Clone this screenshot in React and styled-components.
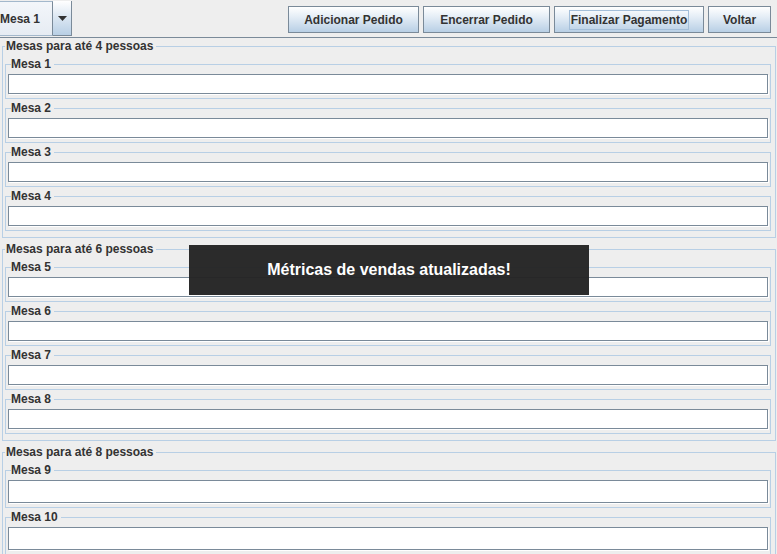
import React from 'react'
import styled, { createGlobalStyle } from 'styled-components'

const Global = createGlobalStyle`
    html, body {
        margin: 0;
        padding: 0;
        background: #eeeeee;
        overflow: hidden;
    }
    body {
        font-family: "Liberation Sans", Arial, sans-serif;
        font-size: 12px;
        color: #333333;
    }
`

const Frame = styled.div`
    position: relative;
    width: 777px;
    height: 554px;
    overflow: hidden;
    background: #eeeeee;
`

const Toolbar = styled.div`
    display: flex;
    align-items: flex-start;
    height: 37px;
    border-bottom: 1px solid #7a8a99;
    box-sizing: content-box;
`

const Combo = styled.div`
    display: flex;
    margin-top: 1px;
    height: 35px;
`

const ComboValue = styled.div`
    width: 52px;
    height: 33px;
    display: flex;
    align-items: center;
    font-weight: bold;
    color: #333333;
    background: linear-gradient(#f3f6fa, #e6ecf3);
    border: 1px solid #a3b8cc;
    border-left: none;
    border-right-color: #7a8a99;
`

const ComboArrow = styled.div`
    width: 18px;
    height: 34px;
    display: flex;
    align-items: center;
    justify-content: center;
    background: linear-gradient(#ffffff, #dde8f3 45%, #b8cfe5);
    border: 1px solid #7a8a99;
    border-left: none;
    border-top: none;
`

const Spacer = styled.div`
    flex: 1;
`

const Buttons = styled.div`
    display: flex;
    gap: 4px;
    margin-top: 6px;
    margin-right: 6px;
`

const Button = styled.button`
    box-sizing: border-box;
    width: ${p => p.w}px;
    height: 27px;
    padding: 0;
    display: flex;
    align-items: center;
    justify-content: center;
    font-family: "Liberation Sans", Arial, sans-serif;
    font-size: 12px;
    font-weight: bold;
    color: #333333;
    background: linear-gradient(#ffffff, #e4edf6 40%, #b8cfe5);
    border: 1px solid #7a8a99;
    border-radius: 0;
`

const FocusText = styled.span`
    padding: 2px 1px;
    border: ${p => (p.focused ? '1px solid #a3bed9' : '1px solid transparent')};
`

const Content = styled.div`
    display: flex;
    flex-direction: column;
    gap: 4px;
    padding-top: 1px;
`

const Group = styled.fieldset`
    margin: 0 1px 0 2px;
    padding: 4px 4px 6px 2px;
    border: 1px solid #b8cfe5;
    min-inline-size: 0;
    display: flex;
    flex-direction: column;
    gap: 2px;
`

const GroupTitle = styled.legend`
    padding: 0 3px 0 1px;
    margin: 0;
    font-weight: bold;
    font-size: 12px;
    line-height: 14px;
    color: #333333;
`

const Table = styled.fieldset`
    margin: 0;
    padding: 3px 2px 3px 2px;
    border: 1px solid #b8cfe5;
    min-inline-size: 0;
`

const TableTitle = styled.legend`
    padding: 0 3px 0 0;
    margin: 0 0 0 3px;
    font-weight: bold;
    font-size: 12px;
    line-height: 14px;
    color: #333333;
`

const Field = styled.input`
    display: block;
    box-sizing: border-box;
    width: 760px;
    height: ${p => (p.tall ? 23 : 20)}px;
    margin: 0 0 1px 0;
    padding: 0 2px;
    background: #ffffff;
    border: 1px solid #7a8a99;
    box-shadow: 1px 1px 0 #ffffff;
    outline: none;
    font-family: "Liberation Sans", Arial, sans-serif;
    font-size: 12px;
`

const Toast = styled.div`
    position: absolute;
    left: 189px;
    top: 245px;
    width: 400px;
    height: 50px;
    display: flex;
    align-items: center;
    justify-content: center;
    background: rgba(36, 36, 36, 0.97);
    color: #ffffff;
    font-family: "Liberation Sans", Arial, sans-serif;
    font-size: 16px;
    font-weight: bold;
`

const groups = [
    { title: 'Mesas para até 4 pessoas', tables: [1, 2, 3, 4] },
    { title: 'Mesas para até 6 pessoas', tables: [5, 6, 7, 8] },
    { title: 'Mesas para até 8 pessoas', tables: [9, 10], tall: true },
]

export default function App() {
    return (
        <Frame>
            <Global />
            <Toolbar>
                <Combo>
                    <ComboValue>Mesa 1</ComboValue>
                    <ComboArrow>
                        <svg width="9" height="5" viewBox="0 0 9 5">
                            <path d="M0 0 H9 L4.5 5 Z" fill="#333333" />
                        </svg>
                    </ComboArrow>
                </Combo>
                <Spacer />
                <Buttons>
                    <Button w={131}><FocusText>Adicionar Pedido</FocusText></Button>
                    <Button w={127}><FocusText>Encerrar Pedido</FocusText></Button>
                    <Button w={150}><FocusText focused>Finalizar Pagamento</FocusText></Button>
                    <Button w={63}><FocusText>Voltar</FocusText></Button>
                </Buttons>
            </Toolbar>
            <Content>
                {groups.map(g => (
                    <Group key={g.title}>
                        <GroupTitle>{g.title}</GroupTitle>
                        {g.tables.map(n => (
                            <Table key={n}>
                                <TableTitle>Mesa {n}</TableTitle>
                                <Field tall={g.tall} readOnly />
                            </Table>
                        ))}
                    </Group>
                ))}
            </Content>
            <Toast>Métricas de vendas atualizadas!</Toast>
        </Frame>
    )
}
